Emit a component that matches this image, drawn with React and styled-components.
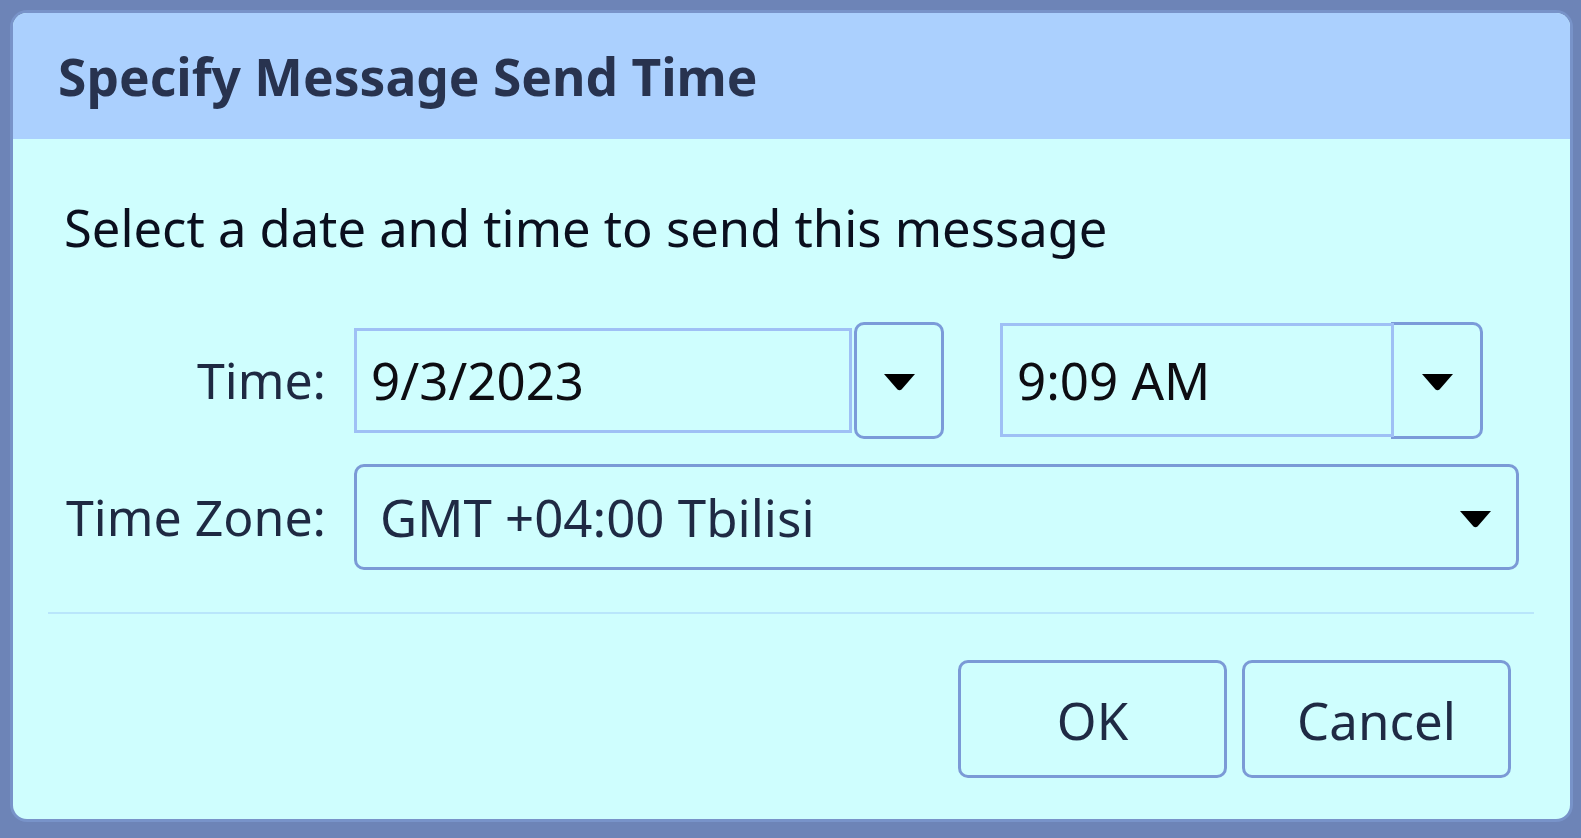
import React from "react";
import styled, { createGlobalStyle } from "styled-components";

const GlobalStyle = createGlobalStyle`
  html, body {
    margin: 0;
    padding: 0;
    background: #6d84b7;
  }
  body {
    font-family: "Noto Sans", "Open Sans", sans-serif;
  }
`;

export default function App() {
  return (
    <>
      <GlobalStyle />
      <Backdrop>
        <Dialog>
          <Header>
            <Title>Specify Message Send Time</Title>
          </Header>
          <Body>
            <Prompt>Select a date and time to send this message</Prompt>
            <Form>
              <Label>Time:</Label>
              <PickerRow>
                <Picker>
                  <Field $width={498} $height={105}>
                    9/3/2023
                  </Field>
                  <DropButton $width={90}>
                    <Arrow />
                  </DropButton>
                </Picker>
                <Picker>
                  <Field $width={394} $height={114}>
                    9:09 AM
                  </Field>
                  <DropButton $width={92} $joined>
                    <Arrow />
                  </DropButton>
                </Picker>
              </PickerRow>
              <Label>Time Zone:</Label>
              <Select>
                <span>GMT +04:00 Tbilisi</span>
                <Arrow />
              </Select>
            </Form>
            <Divider />
            <Footer>
              <Button>OK</Button>
              <Button>Cancel</Button>
            </Footer>
          </Body>
        </Dialog>
      </Backdrop>
    </>
  );
}

function Arrow() {
  return (
    <svg width="33" height="18" viewBox="0 0 33 18">
      <path d="M1 1 H32 L18.5 16.5 Q16.5 18 14.5 16.5 Z" fill="#000" />
    </svg>
  );
}

const Backdrop = styled.div`
  width: 1581px;
  height: 838px;
  box-sizing: border-box;
  padding: 13px 11px 19px 13px;
`;

const Dialog = styled.div`
  width: 1557px;
  height: 806px;
  display: flex;
  flex-direction: column;
  border-radius: 14px;
  overflow: hidden;
  background: #cffefe;
  box-shadow: 0 0 0 3px #7893c9;
`;

const Header = styled.div`
  height: 126px;
  flex-shrink: 0;
  display: flex;
  align-items: center;
  padding-left: 45px;
  background: #abd0fe;
`;

const Title = styled.h1`
  margin: 0;
  font-size: 51.5px;
  font-weight: 700;
  color: #28334f;
`;

const Body = styled.div`
  flex: 1;
  display: flex;
  flex-direction: column;
  padding-top: 57px;
`;

const Prompt = styled.p`
  margin: 0 0 0 51px;
  font-size: 50.7px;
  line-height: 64px;
  color: #0a0f1e;
`;

const Form = styled.div`
  display: grid;
  grid-template-columns: 262px 1165px;
  column-gap: 28px;
  row-gap: 25px;
  align-items: center;
  margin: 61px 0 0 51px;
`;

const Label = styled.div`
  text-align: right;
  white-space: nowrap;
  font-size: 50px;
  color: #1e2942;
`;

const PickerRow = styled.div`
  display: flex;
  align-items: center;
  gap: 56px;
  height: 118px;
`;

const Picker = styled.div`
  display: flex;
  align-items: center;
  gap: 2px;
`;

const Field = styled.div`
  width: ${(p) => p.$width}px;
  height: ${(p) => p.$height}px;
  box-sizing: border-box;
  display: flex;
  align-items: center;
  padding-left: 14px;
  border: 3px solid #9fc0f5;
  font-size: 51px;
  color: #0d0d12;
  position: relative;
  z-index: 1;
`;

const DropButton = styled.div`
  width: ${(p) => p.$width}px;
  height: 117px;
  box-sizing: border-box;
  display: flex;
  align-items: center;
  justify-content: center;
  border: 3px solid #7b9bd9;
  border-radius: 10px;
  margin-left: ${(p) => (p.$joined ? "-5px" : "0")};
  ${(p) => p.$joined && "border-top-left-radius: 0; border-bottom-left-radius: 0;"}
  padding-top: 4px;
`;

const Select = styled.div`
  height: 106px;
  box-sizing: border-box;
  display: flex;
  align-items: center;
  justify-content: space-between;
  padding: 0 24px 0 23px;
  border: 3px solid #7b9ad6;
  border-radius: 10px;
  font-size: 51px;
  color: #1f2a44;
  svg {
    margin-top: 4px;
  }
`;

const Divider = styled.div`
  height: 2px;
  margin: 42px 36px 0 35px;
  background: #b9e6fb;
`;

const Footer = styled.div`
  display: flex;
  justify-content: flex-end;
  gap: 15px;
  margin-top: 46px;
  padding-right: 59px;
`;

const Button = styled.button`
  width: 269px;
  height: 118px;
  box-sizing: border-box;
  background: transparent;
  border: 3px solid #7b9ad6;
  border-radius: 10px;
  font-family: inherit;
  font-size: 51px;
  color: #1f2a44;
  padding: 0;
  padding-top: 2px;
`;
